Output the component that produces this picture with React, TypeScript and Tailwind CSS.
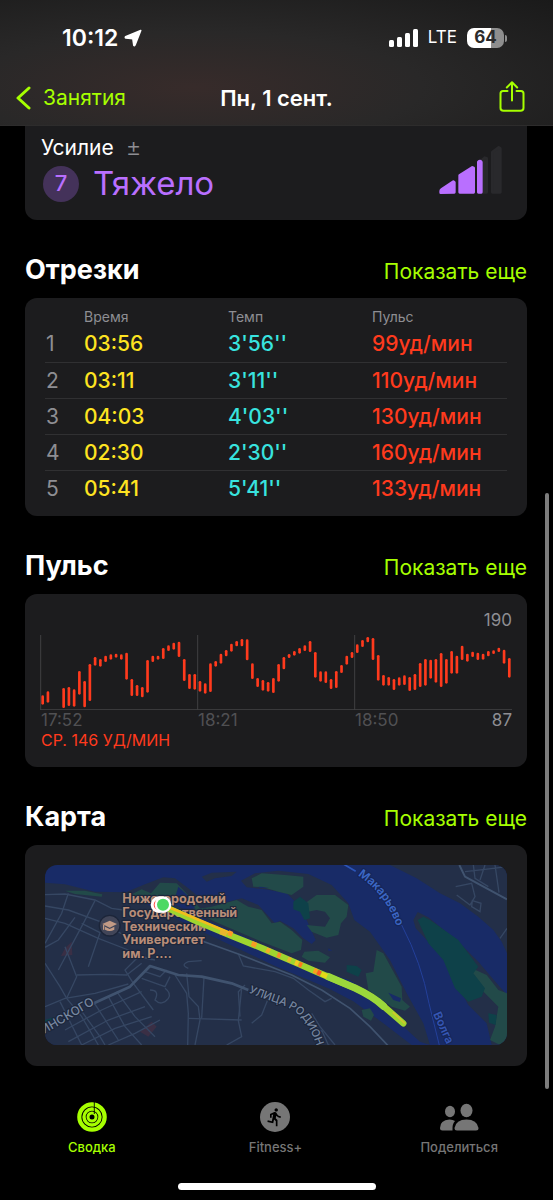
import React from 'react';
import { MdDirectionsRun } from 'react-icons/md';

const splits = [
    { time: '03:56', pace: "3'56''", pulse: 99 },
    { time: '03:11', pace: "3'11''", pulse: 110 },
    { time: '04:03', pace: "4'03''", pulse: 130 },
    { time: '02:30', pace: "2'30''", pulse: 160 },
    { time: '05:41', pace: "5'41''", pulse: 133 },
];

// [top, bottom] of each heart rate range, null where nothing was recorded
const heartRate: ([number, number] | null)[] = [
    [301, 329], [289, 323], null, null, [279, 339], [276, 333], [283, 335], [228, 299], [258, 337], [207, 318],
    [186, 212], [192, 215], [182, 201], [178, 194], [176, 188], [178, 194], [173, 254], [252, 303], [270, 303], [276, 307],
    [195, 293], [182, 201], [182, 194], [159, 192], [151, 168], [143, 164], [140, 186], [192, 258], [237, 282], [237, 284],
    [258, 290], [265, 296], [205, 291], [198, 215], [176, 206], [165, 184], [146, 170], [138, 154], [132, 154], [133, 196],
    [205, 252], [249, 276], [255, 287], [261, 290], [249, 294], [207, 260], [186, 223], [177, 189], [168, 182], [159, 176],
    [151, 168], [138, 171], [171, 248], [229, 260], [229, 264], [252, 282], [228, 279], [210, 234], [182, 209], [171, 189],
    [148, 174], [135, 156], [126, 142], [129, 195], [180, 257], [240, 272], [246, 272], [252, 285], [247, 272], [241, 270],
    [246, 288], [237, 285], [204, 276], [192, 272], [194, 251], [192, 263], [174, 276], [192, 266], [168, 236], [182, 236],
    [152, 195], [176, 200], [170, 186], [173, 195], [176, 194], [168, 184], [166, 177], [158, 171], [164, 206], [189, 248],
];

const roads = [
    'M0 104 L60 102 L150 120 L200 145 L235 150',
    'M0 138 L70 150 L180 190 L235 225',
    'M0 175 L60 190 L160 235 L250 270 L320 300',
    'M70 100 L50 160 L0 250',
    'M150 122 L115 190 L40 330',
    'M90 172 L40 240 L0 262',
    'M110 190 L165 218 L130 320',
    'M0 310 L45 380 L65 415 L110 470 L160 555',
    'M60 260 L95 350 L65 415',
    'M95 345 L180 343 L245 345 L290 310',
    'M0 440 L60 415 L150 400 L250 372',
    'M45 425 L110 555',
    'M100 440 L165 530 L180 555',
    'M145 425 L220 540',
    'M190 410 L240 500 L290 555',
    'M215 395 L270 470 L330 530',
    'M60 510 L170 450 L290 395',
    'M70 545 L190 480 L300 440',
    'M110 555 L210 505 L320 470',
    'M190 555 L270 520 L345 480',
    'M330 300 L280 290 L240 330 L265 370 L325 450',
    'M300 335 L345 350 L365 330',
    'M290 355 L360 380 L375 350',
    'M315 390 Q345 390 330 420 Q350 440 370 415 Q380 400 360 385',
    'M390 345 L425 400 L430 460 L428 555',
    'M425 340 L432 410 L460 440 L465 480 L450 555',
    'M430 475 L590 480',
    'M477 352 L470 475',
    'M590 385 L580 482 L590 530 L545 555',
    'M600 375 L580 395 L585 470',
    'M670 415 L650 465 L620 490',
    'M580 282 L595 318 L690 335 L745 355 L790 390 L840 425 L860 415',
    'M430 325 Q405 315 430 305 L470 302',
    'M800 460 L825 500 L870 555',
    'M830 510 L850 555 L865 560 M780 470 L830 515',
    'M1285 15 L1290 55 L1330 80 M1320 15 L1305 60 M1350 15 L1362 98 M1260 35 L1320 28 L1386 20',
    'M1232 80 L1280 70 L1290 110 L1275 135 L1235 105 M1280 140 L1305 155 L1308 130 L1282 122 Z',
    'M1386 205 L1365 235',
];

const mainRoads = [
    'M135 435 L255 380 L315 318 L400 345 L470 350 L560 370 L610 390',
    'M440 232 L580 282 L740 345 L830 390 L915 445 L975 500 L1030 558',
    'M1243 15 L1260 50 L1386 118',
];

const woods = [
    'M60 92 L120 92 L172 103 L170 110 L90 102 Z',
    'M262 102 L290 88 L318 100 L345 68 L395 70 L430 105 L470 150 L420 140 L350 120 L280 125 Z',
    'M440 150 L500 140 L575 120 L610 140 L650 150 L680 190 L705 185 L740 210 L772 240 L768 270 L740 280 L650 245 L510 185 Z',
    'M620 55 L650 40 L720 45 L775 50 L775 80 L740 105 L700 95 L655 82 L625 80 Z',
    'M780 130 L815 105 L870 105 L910 135 L905 170 L888 190 L880 225 L845 233 L800 215 L785 195 L840 200 L855 175 L840 155 L815 150 L790 155 Z',
    'M778 275 L820 272 L855 292 L840 308 L790 302 L770 290 Z',
    'M995 270 L1015 280 L1070 380 L1072 420 L1095 440 L1080 452 L1040 440 L970 390 L962 340 L985 335 Z',
    'M950 450 L975 445 L987 465 L978 482 L955 470 Z',
    'M1270 320 L1325 345 L1360 390 L1386 400 L1386 545 L1365 555 L1335 540 L1350 500 L1360 440 L1320 400 L1280 360 Z',
];

const deepWoods = [
    'M745 125 L765 110 L790 130 L795 175 L778 180 L765 155 L745 148 Z',
    'M905 315 L935 318 L950 330 L940 350 L905 335 Z',
    'M1118 180 L1135 170 L1155 180 L1240 240 L1300 320 L1285 340 L1320 385 L1310 410 L1270 425 L1230 385 L1195 300 L1150 250 Z',
    'M0 480 L25 472 L10 492 L0 490 Z',
    'M1330 460 L1355 465 L1352 495 L1332 488 Z',
];

const routeMarks = [
    { d: 'M525 215 L545 222', color: '#e8b52d' },
    { d: 'M550 218 L562 223', color: '#ff9a26' },
    { d: 'M620 250 L634 256', color: '#f79c25' },
    { d: 'M664 269 L675 274', color: '#f3a92b' },
    { d: 'M697 284 L707 288', color: '#f68b2b' },
    { d: 'M728 297 L738 301', color: '#e5b52b' },
    { d: 'M750 307 L760 311', color: '#f5c722' },
    { d: 'M762 312 L771 316', color: '#ff7a1f' },
    { d: 'M806 331 L816 335', color: '#ff9a1f' },
    { d: 'M817 336 L827 341', color: '#ff5722' },
    { d: 'M829 342 L846 349', color: '#e6d817' },
];

const ROUTE = 'M370 145 L450 182 L550 224 L650 264 L750 307 L830 342 L930 384 Q985 410 1015 438 L1075 490';

const StatusBar = () => (
    <div className="flex h-[76px] items-center justify-between pl-[62px] pr-[46px] text-white">
        <div className="flex items-center gap-1.5 text-[23px] font-semibold">
            10:12
            <svg viewBox="370 86 57 56" className="size-[18px]" fill="currentColor" stroke="currentColor" strokeWidth="5" strokeLinejoin="round">
                <path d="M423 90 L375 110 Q373 113 376 114 L398 116 L401 137 Q403 140 405 136 Z" />
            </svg>
        </div>
        <div className="flex items-center">
            <svg viewBox="0 0 29 18" className="h-[18px] w-[29px] fill-white">
                <rect x="0" y="11" width="5" height="7" rx="1.5" />
                <rect x="8" y="8" width="5" height="10" rx="1.5" />
                <rect x="16" y="4" width="5" height="14" rx="1.5" />
                <rect x="24" y="0" width="5" height="18" rx="1.5" />
            </svg>
            <span className="ml-2.5 text-[17px]">LTE</span>
            <div className="ml-2.5 flex items-center gap-px">
                <div className="flex h-5 w-[37px] items-center justify-center rounded-[7px] bg-linear-to-r from-white from-65% to-[#8e8e8e] to-65% text-[17px] font-bold text-[#2a2a2a]">
                    64
                </div>
                <div className="h-[7px] w-[2px] rounded-r-full bg-[#8e8e8e]" />
            </div>
        </div>
    </div>
);

const Header = () => (
    <header className="border-b border-[#2d2c2c] bg-[radial-gradient(ellipse_at_35%_70%,#372b2a_0%,#292828_45%,#1a1a1a_100%)]">
        <StatusBar />
        <div className="grid h-[49px] grid-cols-3 items-start pl-4 pr-7">
            <a href="#workouts" className="flex items-center gap-3 pt-2 text-[21px] leading-[28px] text-[#a6ff00]">
                <svg viewBox="0 0 15 24" className="h-6 w-[15px]" fill="none" stroke="currentColor" strokeWidth="3" strokeLinecap="round" strokeLinejoin="round">
                    <path d="M13 2 L2 12 L13 22" />
                </svg>
                Занятия
            </a>
            <h1 className="whitespace-nowrap pt-2 pl-3 text-center text-[22px] leading-[28px] font-semibold text-white">Пн, 1 сент.</h1>
            <button type="button" aria-label="Поделиться тренировкой" className="justify-self-end pt-[5px] text-[#a6ff00]">
                <svg viewBox="0 0 26 31" className="h-[31px] w-[26px]" fill="none" stroke="currentColor" strokeWidth="2" strokeLinecap="round" strokeLinejoin="round">
                    <path d="M8.5 10 H4 Q1.5 10 1.5 12.500 V27 Q1.500 29.800 4.500 29.800 H21.500 Q24.500 29.800 24.500 27 V12.500 Q24.500 10 22 10 H17.500" />
                    <path d="M13 19.500 V1.500 M7.800 6.500 L13 1.300 L18.200 6.500" />
                </svg>
            </button>
        </div>
    </header>
);

const EffortCard = () => (
    <section className="flex h-[94px] justify-between rounded-b-xl bg-[#1c1c1e] pr-[25px] pl-4">
        <div>
            <div className="flex items-center gap-3 pt-2 text-[21px] leading-7 text-white">
                Усилие
                <button type="button" aria-label="Изменить усилие" className="text-[24px] leading-7 font-light text-[#8e8e93]">±</button>
            </div>
            <div className="flex items-center gap-3.5 pl-0.5">
                <span className="flex size-9 items-center justify-center rounded-full bg-[#44325a] text-[22px] font-medium text-[#b96fff]">7</span>
                <span className="text-[33px] leading-[43px] text-[#b96fff]">Тяжело</span>
            </div>
        </div>
        <svg viewBox="489 436 189 144" className="mt-5 h-12 w-[63px]" fill="#b96fff" stroke="#b96fff" strokeWidth="8" strokeLinejoin="round">
            <path d="M494 576 V571 Q494 568 497 566 L532 543 L535 545 V575 Z" />
            <path d="M551 575 V524 L589 500 L593 502 V575 Z" />
            <g fill="#29292c" stroke="#29292c">
                <path d="M612 575 V483 L626 471 L632 473 V575 Z" />
                <path d="M649 575 V454 L668 440 L673 443 V575 Z" />
            </g>
            <path d="M607 575 V484 Q612 479 616 484 V575 Z" />
        </svg>
    </section>
);

const SectionTitle = ({ title, href }: { title: string; href: string }) => (
    <div className="flex h-[78px] items-baseline justify-between pt-[34px]">
        <h2 className="text-[27px] leading-8 font-bold text-white">{title}</h2>
        <a href={href} className="text-[21px] leading-8 text-[#a6ff00]">Показать еще</a>
    </div>
);

const SplitsCard = () => (
    <div className="rounded-xl bg-[#1c1c1e] px-5 py-2.5">
        <table className="w-full table-fixed border-collapse text-left whitespace-nowrap">
            <thead>
                <tr className="h-[18px] text-[14px] leading-[18px] text-[#8e8e93]">
                    <th aria-label="Номер" className="w-[39px] p-0" />
                    <th className="w-36 p-0 font-normal">Время</th>
                    <th className="w-36 p-0 font-normal">Темп</th>
                    <th className="p-0 font-normal">Пульс</th>
                </tr>
            </thead>
            <tbody className="text-[21px] leading-[35px]">
                {splits.map((split, i) => (
                    <tr key={split.time} className="h-9 border-b border-[#303032] last:border-0">
                        <td className="p-0 pl-px text-[#8e8e93]">{i + 1}</td>
                        <td className="p-0 font-medium text-[#fde321]">{split.time}</td>
                        <td className="p-0 font-medium text-[#38e3df]">{split.pace}</td>
                        <td className="p-0 font-medium text-[#ff3a1d]">{split.pulse}уд/мин</td>
                    </tr>
                ))}
            </tbody>
        </table>
    </div>
);

const PulseCard = () => (
    <div className="rounded-xl bg-[#1c1c1e] px-[15px] py-4">
        <p className="text-right text-[17px] leading-[20px] text-[#8e8e93]">190</p>
        <svg viewBox="0 105 1416 241" className="block w-full" role="img" aria-label="График пульса">
            <g stroke="#3f3f42" strokeWidth="3">
                <path d="M2 120 V345 M473 120 V345 M944 120 V345" />
                <path d="M0 344 H1416" />
            </g>
            <g stroke="#ff3a1d" strokeWidth="8" strokeLinecap="round">
                {heartRate.map((range, i) =>
                    range && <line key={i} x1={8 + i * 15.73} x2={8 + i * 15.73} y1={range[0] + 4} y2={range[1] - 4} />
                )}
            </g>
        </svg>
        <div className="grid grid-cols-3 pl-px text-[17px] leading-5 text-[#505053]">
            <span>17:52</span>
            <span>18:21</span>
            <span className="flex justify-between">
                18:50
                <span className="text-[#8e8e93]">87</span>
            </span>
        </div>
        <p className="pb-px pl-px text-[16px] leading-5 text-[#ff3a1d]">СР. 146 УД/МИН</p>
    </div>
);

const RouteMap = () => (
    <svg viewBox="0 15 1386 540" className="block w-full rounded-xl" role="img" aria-label="Карта маршрута">
        <defs>
            <path id="labelStreet" d="M610 397 C680 430 745 432 783 488 C803 522 815 550 830 610" />
            <path id="labelMakaryevo" d="M938 46 Q1035 110 1064 230" />
            <path id="labelVolga" d="M1164 462 L1222 590" />
            <path id="labelAvenue" d="M-62 557 L150 432" />
        </defs>
        <rect y="15" width="1386" height="540" fill="#182b67" />
        <g fill="#232f48">
            <path d="M0 68 L60 73 L150 95 L245 97 L290 125 L370 165 L450 205 L690 318 L850 385 L925 424 L1015 490 L1100 555 L0 555 Z" />
            <path d="M235 100 L300 73 L355 52 L390 55 L430 85 L470 118 L530 130 L590 115 L640 135 L690 190 L705 182 L745 205 L775 235 L800 252 L812 240 L785 180 L755 130 L725 100 L660 88 L605 82 L588 62 L630 40 L700 32 L790 42 L860 75 L910 130 L928 180 L975 215 L1035 300 L1085 400 L1135 490 L1155 555 L1125 545 L1070 495 L1010 430 L915 360 L860 345 L700 275 L450 165 L370 135 Z" />
            <path d="M1035 15 L1115 55 L1185 100 L1245 130 L1300 170 L1345 210 L1370 245 L1386 280 V15 Z" />
            <path d="M1105 180 L1118 156 L1150 172 L1240 245 L1300 305 L1355 370 L1386 405 V555 H1340 L1325 490 L1270 435 L1235 370 L1195 290 L1150 245 L1112 205 Z" />
            <path d="M470 50 L500 38 L575 35 L560 48 L510 55 L485 65 Z" />
        </g>
        <g fill="#224a49">
            {woods.map((d) => <path key={d} d={d} />)}
        </g>
        <g fill="#0e4149">
            {deepWoods.map((d) => <path key={d} d={d} />)}
        </g>
        <g fill="#182b67">
            <path d="M400 80 L430 108 L450 145 L420 150 L385 130 Z" />
            <path d="M1030 398 L1068 415 L1065 426 L1045 420 Z" />
            <path d="M850 265 L862 272 L850 272 Z M640 80 L672 82 L645 84 Z" />
        </g>
        <g fill="#3a2f45">
            <path d="M60 265 L80 245 L82 285 L48 288 Z" />
            <path d="M285 515 L320 485 L335 500 L310 530 Z" />
        </g>
        <g fill="none" stroke="#364763" strokeWidth="4">
            {roads.map((d) => <path key={d} d={d} />)}
        </g>
        <g fill="none" stroke="#40536f" strokeWidth="8" strokeLinejoin="round">
            <path d={mainRoads[0]} />
            <path d={mainRoads[1]} strokeWidth="5" />
            <path d={mainRoads[2]} strokeWidth="6" />
        </g>
        <path d="M1070 195 Q1130 310 1152 430 L1184 560" fill="none" stroke="#24409a" strokeWidth="3" />
        <path d="M895 12 L932 34" stroke="#2c55b8" strokeWidth="5" />

        <g fontFamily="Inter, sans-serif" fontWeight="700" stroke="#1c263b" strokeWidth="7" strokeLinejoin="round" paintOrder="stroke">
            <g fontSize="36" fill="#7787a0" fontWeight="500">
                <text fontSize="33"><textPath href="#labelStreet">УЛИЦА РОДИОН</textPath></text>
                <text textAnchor="end"><textPath href="#labelAvenue" startOffset="100%">ИНСКОГО</textPath></text>
            </g>
            <g fontSize="35" fill="#3c68c6" stroke="#162659" fontWeight="600">
                <text><textPath href="#labelMakaryevo">Макарьево</textPath></text>
                <text fill="#3556b4"><textPath href="#labelVolga">Волга</textPath></text>
            </g>
            <g fontSize="38" fill="#b88d78">
                <text x="232" y="130">Нижегородский</text>
                <text x="232" y="171">Государственный</text>
                <text x="232" y="212">Технический</text>
                <text x="232" y="253">Университет</text>
                <text x="232" y="293">им. Р.…</text>
            </g>
        </g>

        <circle cx="194" cy="197" r="31" fill="#414558" stroke="#1c2539" strokeWidth="4" />
        <g fill="#c29a85">
            <path d="M194 182 L216 192 L194 203 L172 192 Z" />
            <path d="M180 200 L194 207 L208 200 V209 Q194 217 180 209 Z" />
            <path d="M174 194 H178 V209 H174 Z" />
        </g>

        <g fill="none" strokeLinecap="round" strokeLinejoin="round">
            <path d={ROUTE} stroke="#9fd52f" strokeWidth="19" />
            <path d="M370 141 L450 175 L550 217" stroke="#f2bd1c" strokeWidth="8" />
            <path d="M850 350 L930 384 Q985 410 1015 438" stroke="#9bd83b" strokeWidth="22" />
            <path d="M1045 458 L1078 489" stroke="#d3c62c" strokeWidth="5" />
        </g>
        <g fill="none" strokeWidth="15">
            {routeMarks.map((mark) => <path key={mark.d} d={mark.d} stroke={mark.color} />)}
        </g>
        <circle cx="342" cy="134" r="25" fill="#fff" />
        <circle cx="342" cy="134" r="16" fill="#ff4b44" />
        <circle cx="354" cy="134" r="25" fill="#fff" />
        <circle cx="354" cy="134" r="18" fill="#4bd964" />
    </svg>
);

const RingsIcon = () => (
    <svg viewBox="0 0 30 30" className="size-[30px]" fill="none" stroke="currentColor">
        <circle cx="15" cy="15" r="12.700" strokeWidth="4.200" />
        <circle cx="15" cy="15" r="8" strokeWidth="3.400" />
        <circle cx="15" cy="15" r="4" strokeWidth="3" />
        <path d="M17.300 0 V12" stroke="#000" strokeWidth="0.900" />
    </svg>
);

const FitnessIcon = () => (
    <span className="flex size-[30px] items-center justify-center rounded-full bg-[#767676] text-black">
        <MdDirectionsRun className="size-5" />
    </span>
);

const SharingIcon = () => (
    <svg viewBox="0 0 40 30" className="h-[30px] w-10" fill="currentColor">
        <ellipse cx="11" cy="9.500" rx="5" ry="5.800" />
        <path d="M1 26 Q1 18 10.500 17.500 Q14 17.500 16 19 Q13 22 13.500 28.500 H3.500 Q1 28.500 1 26 Z" />
        <ellipse cx="27.500" cy="8.500" rx="6" ry="6.800" />
        <path d="M15.500 26 Q17 17.500 27.500 17.500 Q38 17.500 39.500 26 Q39.500 28.500 37 28.500 H18 Q15.500 28.500 15.500 26 Z" />
    </svg>
);

const tabs = [
    { id: 'summary', label: 'Сводка', icon: RingsIcon, active: true },
    { id: 'fitness', label: 'Fitness+', icon: FitnessIcon, active: false },
    { id: 'sharing', label: 'Поделиться', icon: SharingIcon, active: false },
];

const TabBar = () => (
    <nav className="grid grid-cols-3 pt-9 pr-0.5">
        {tabs.map((tab) => (
            <a
                key={tab.id}
                href={`#${tab.id}`}
                className={tab.active
                    ? 'flex flex-col items-center gap-1.5 text-[13px] leading-[18px] font-medium text-[#a6ff00]'
                    : 'flex flex-col items-center gap-1.5 text-[13px] leading-[18px] font-medium text-[#767676]'}
            >
                <tab.icon />
                {tab.label}
            </a>
        ))}
    </nav>
);

export default function App() {
    return (
        <div className="relative flex min-h-screen flex-col bg-black font-[Inter,sans-serif]">
            <Header />
            <main className="pr-[26px] pl-[25px]">
                <EffortCard />
                <SectionTitle title="Отрезки" href="#splits" />
                <SplitsCard />
                <SectionTitle title="Пульс" href="#pulse" />
                <PulseCard />
                <SectionTitle title="Карта" href="#map" />
                <div className="rounded-xl bg-[#1c1c1e] px-5 pt-5 pb-[21px]">
                    <RouteMap />
                </div>
            </main>
            <TabBar />
            <div className="mx-auto mt-auto mb-2.5 h-[7px] w-[198px] rounded-full bg-white" />
            <div className="absolute top-[493px] right-1 h-[596px] w-1 rounded-full bg-[#7d7d7d]" />
        </div>
    );
}
